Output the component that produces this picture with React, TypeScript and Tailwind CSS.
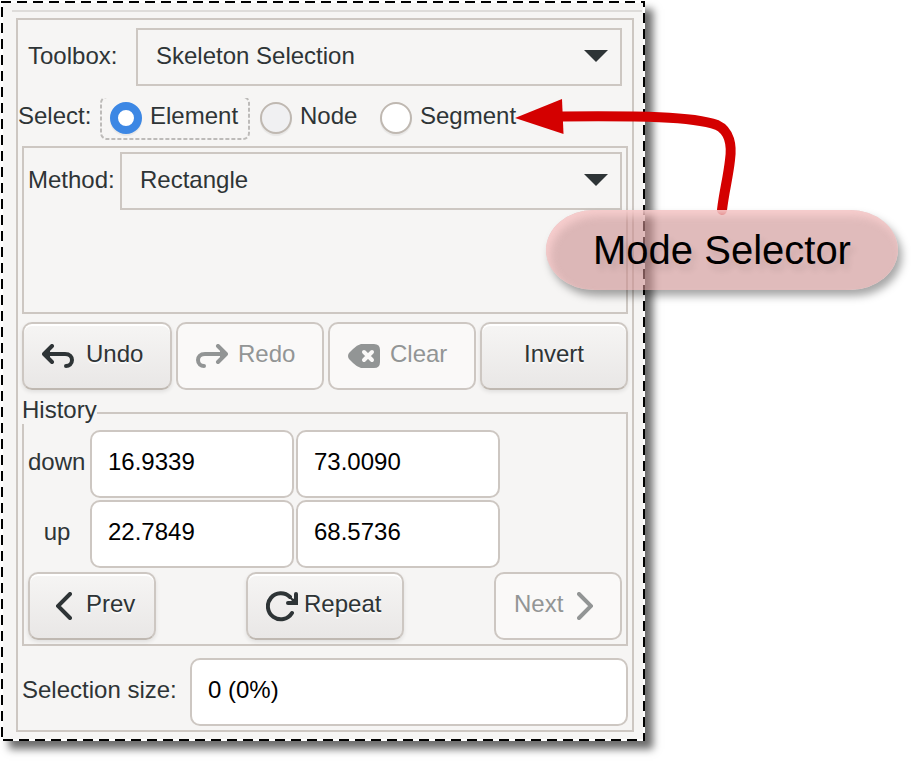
import type { ReactNode } from "react";

function Caret() {
  return (
    <svg className="pointer-events-none absolute top-1/2 right-3.5 -mt-[7px]" width="24" height="12" viewBox="0 0 24 12" aria-hidden="true">
      <path d="M0 0H24L12 12Z" fill="#2e3436" />
    </svg>
  );
}

function Dropdown({ id, value }: { id: string; value: string }) {
  return (
    <div className="relative flex-1">
      <select
        id={id}
        defaultValue={value}
        className="block h-[58px] w-full appearance-none border-2 border-[#cdc7c2] bg-[#f6f5f4] pr-12 pb-0.5 pl-[18px] text-2xl text-[#2e3436] outline-none"
      >
        <option>{value}</option>
      </select>
      <Caret />
    </div>
  );
}

function Mode({ label, checked, focused, look, radio }: { label: string; checked?: boolean; focused?: boolean; look: string; radio: string }) {
  return (
    <label className={`relative flex h-[42px] items-start gap-2 pt-1 ${look}`}>
      {focused && (
        <svg className="pointer-events-none absolute inset-0 size-full" viewBox="0 0 150 42" aria-hidden="true">
          <rect x="1" y="-1" width="148" height="42" rx="6" fill="none" stroke="#bdbbb9" strokeWidth="2" strokeDasharray="4 2" />
        </svg>
      )}
      <input
        type="radio"
        name="mode"
        defaultChecked={checked}
        className={`size-8 shrink-0 appearance-none rounded-full border-2 border-[#bfb8b1] shadow-[0_2px_1px_rgba(0,0,0,0.06)] checked:border-8 checked:border-[#3c87e4] checked:bg-white ${radio}`}
      />
      <span className="-mt-0.5">{label}</span>
    </label>
  );
}

function Button({ children, disabled, className }: { children: ReactNode; disabled?: boolean; className: string }) {
  return (
    <button
      type="button"
      disabled={disabled}
      className={`flex h-[68px] items-center rounded-[10px] border-2 border-[#cdc7c2] pb-1 text-2xl whitespace-nowrap enabled:border-b-[#bfb8b1] enabled:bg-linear-to-b enabled:from-[#f6f5f4] enabled:to-[#e9e7e6] enabled:shadow-[inset_0_2px_0_#fff,0_2px_4px_rgba(0,0,0,0.09)] enabled:text-shadow-[0_2px_0_#ffffffc0] disabled:bg-[#faf9f8] disabled:text-[#929595] ${className}`}
    >
      {children}
    </button>
  );
}

function Hook({ className }: { className?: string }) {
  return (
    <svg className={`mt-1 shrink-0 ${className ?? ""}`} width="32" height="24" viewBox="0 0 32 24" fill="none" stroke="currentColor" strokeWidth="4" strokeLinecap="round" strokeLinejoin="round" aria-hidden="true">
      <path d="M10 2L2 10L10 18" />
      <path d="M3 10H23C28 10 30 13 30 16C30 20 27 22 24 22" />
      <path d="M2 10L8 5V15Z" fill="currentColor" stroke="none" />
    </svg>
  );
}

function Erase() {
  return (
    <svg className="mt-1 shrink-0" width="32" height="24" viewBox="0 0 32 24" aria-hidden="true">
      <path d="M13 0H26Q32 0 32 6V18Q32 24 26 24H13Q9 23 5 19L1 15Q-1 12 1 9L5 5Q9 1 13 0Z" fill="currentColor" />
      <path d="M16 8L24 16M24 8L16 16" stroke="#faf9f8" strokeWidth="4" strokeLinecap="round" />
    </svg>
  );
}

function Chevron({ className }: { className?: string }) {
  return (
    <svg className={`mt-1 shrink-0 ${className ?? ""}`} width="16" height="28" viewBox="0 0 16 28" fill="none" stroke="currentColor" strokeWidth="4" strokeLinecap="round" aria-hidden="true">
      <path d="M14 2L2 14L14 26" />
    </svg>
  );
}

function Reload() {
  return (
    <svg className="mt-1 shrink-0" width="32" height="32" viewBox="0 0 32 32" fill="none" stroke="currentColor" strokeWidth="4" strokeLinecap="round" aria-hidden="true">
      <path d="M24 7A13 13 0 1 0 26 23" />
      <path d="M30 4V12" />
      <path d="M22 13H30" />
      <path d="M22 6L32 11V15H22L26 11Z" fill="currentColor" stroke="none" />
    </svg>
  );
}

function Field({ id, value, label, className }: { id?: string; value: string; label?: string; className: string }) {
  return (
    <input
      id={id}
      aria-label={label}
      defaultValue={value}
      className={`h-[68px] min-w-0 rounded-[10px] border-2 border-[#cdc7c2] bg-white px-4 pb-1 text-2xl text-black outline-none ${className}`}
    />
  );
}

export default function App() {
  return (
    <main className="bg-white pt-px pr-[269px] pb-5 pl-px font-['Liberation_Sans',Arial,sans-serif]">
      <div className="relative bg-[#f6f5f4] py-[9px] pr-[11px] pl-[15px] text-2xl leading-8 text-[#2e3436] shadow-[8px_8px_8px_rgba(0,0,0,0.58)]">
        <svg className="pointer-events-none absolute inset-0 size-full" aria-hidden="true">
          <rect width="100%" height="100%" fill="none" stroke="#fff" strokeWidth="4" />
          <rect width="100%" height="100%" fill="none" stroke="#000" strokeWidth="4" strokeDasharray="10 6" />
        </svg>
        <div className="-mr-2 -ml-1 h-0.5 bg-[#dedcda]" />

        <form className="mt-1.5 border-2 border-[#cdc7c2] px-1 pt-2 pb-1">
          <div className="flex px-1.5">
            <label htmlFor="toolbox" className="w-[108px] pt-3">
              Toolbox:
            </label>
            <Dropdown id="toolbox" value="Skeleton Selection" />
          </div>

          <div role="radiogroup" aria-labelledby="mode-title" className="mt-3 -ml-1 flex">
            <span id="mode-title" className="w-[82px] pt-0.5">
              Select:
            </span>
            <Mode label="Element" checked focused look="w-[150px] pl-2.5" radio="" />
            <Mode label="Node" look="w-[130px] pl-2.5" radio="bg-[#f0f0f2]" />
            <Mode label="Segment" look="" radio="bg-white" />
          </div>

          <div className="mt-1.5 h-[168px] border-2 border-[#cdc7c2] p-1">
            <div className="flex">
              <label htmlFor="method" className="w-[92px] pt-3">
                Method:
              </label>
              <Dropdown id="method" value="Rectangle" />
            </div>
          </div>

          <div className="mt-2 grid grid-cols-[150px_1fr_1fr_1fr] gap-1">
            <Button className="gap-3 pl-[18px]">
              <Hook />
              Undo
            </Button>
            <Button disabled className="gap-2.5 pl-[18px]">
              <Hook className="-scale-x-100" />
              Redo
            </Button>
            <Button disabled className="gap-2.5 pl-[18px]">
              <Erase />
              Clear
            </Button>
            <Button className="justify-center">Invert</Button>
          </div>

          <fieldset className="relative mt-[22px] border-2 border-[#cdc7c2] px-1 pt-4 pb-1">
            <legend className="absolute -top-[18px] -left-0.5 bg-[#f6f5f4] leading-7">History</legend>
            <div className="grid grid-cols-[62px_204px_206px] gap-y-0.5">
              <label htmlFor="down-x" className="pt-4">
                down
              </label>
              <Field id="down-x" value="16.9339" className="w-full" />
              <Field label="down y" value="73.0090" className="ml-0.5" />
              <label htmlFor="up-x" className="pt-4 pr-1 text-center">
                up
              </label>
              <Field id="up-x" value="22.7849" className="w-full" />
              <Field label="up y" value="68.5736" className="ml-0.5" />
            </div>
            <div className="mt-1 flex justify-between">
              <Button className="w-32 gap-3.5 pl-[26px]">
                <Chevron />
                Prev
              </Button>
              <Button className="w-[158px] gap-1.5 pl-[18px]">
                <Reload />
                Repeat
              </Button>
              <Button disabled className="w-32 gap-3.5 pl-[18px]">
                Next
                <Chevron className="-scale-x-100" />
              </Button>
            </div>
          </fieldset>

          <div className="mt-3 flex">
            <label htmlFor="size" className="w-[168px] shrink-0 pt-4">
              Selection size:
            </label>
            <Field id="size" value="0 (0%)" className="flex-1" />
          </div>
        </form>

        <svg className="pointer-events-none absolute top-[97px] -right-[94px]" width="224" height="120" viewBox="515 98 224 120" aria-hidden="true">
          <path d="M562 116.500C640 116 692 116 717 125C730 131 732 146 730 160C728 178 724 192 722 210" fill="none" stroke="#d40000" strokeWidth="10" strokeLinecap="round" />
          <path d="M515 118L562 99L563.500 134Z" fill="#d40000" />
        </svg>
        <div className="absolute top-[209px] -right-[253px] flex h-20 w-[352px] items-center justify-center rounded-[48px/40px] bg-[#cb8e8e]/60 text-[40px] text-black shadow-[inset_4px_6px_8px_#fbd0d0e0,4px_6px_8px_rgba(0,0,0,0.35)] text-shadow-[4px_6px_6px_#0000001a]">
          Mode Selector
        </div>
      </div>
    </main>
  );
}
